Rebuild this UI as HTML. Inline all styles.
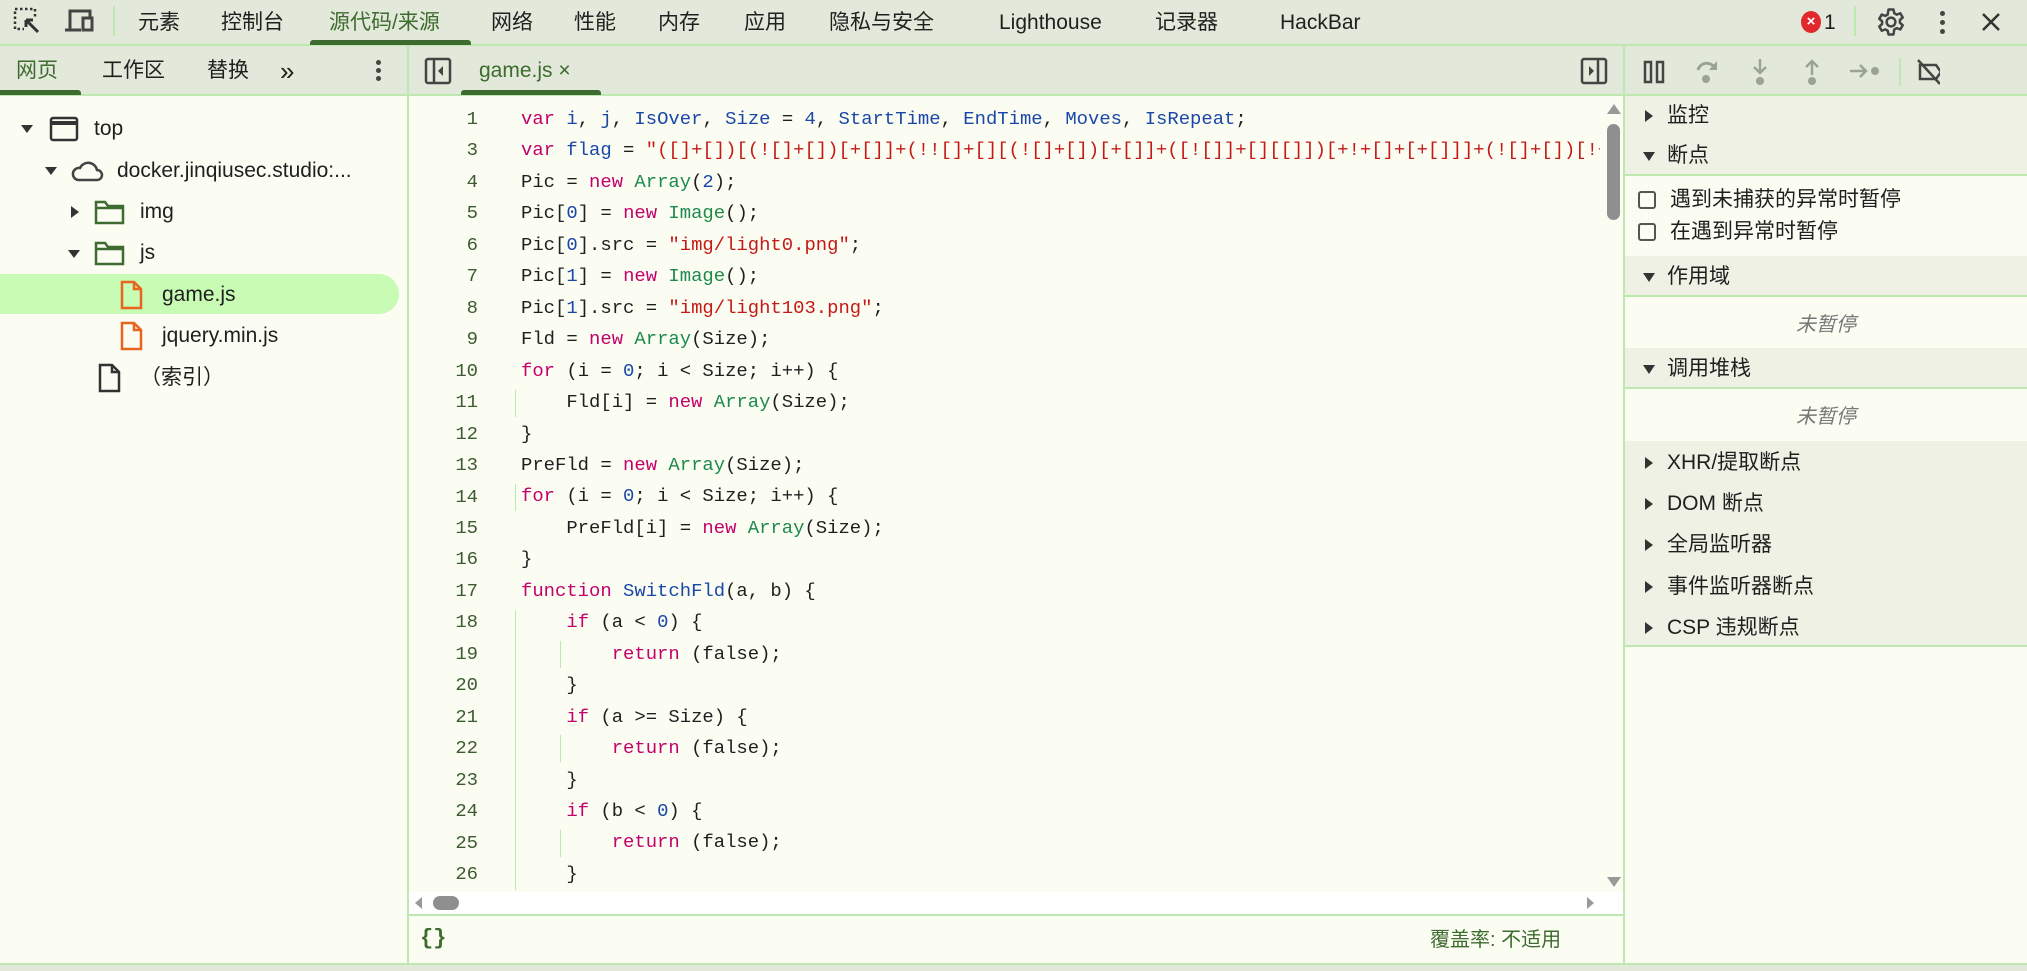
<!DOCTYPE html>
<html><head><meta charset="utf-8"><style>
*{box-sizing:border-box;margin:0;padding:0}
body{width:2027px;height:971px;overflow:hidden;background:#fbfdf3;font-family:"Liberation Sans","Noto Sans CJK SC",sans-serif;color:#1f1f1f;position:relative;font-size:21px;line-height:30px}
.a{position:absolute;white-space:nowrap}
.t{top:0;line-height:46px}
.t2{top:48px;line-height:46px}
.bar{background:#e3e9da;border-bottom:2px solid #bfe8b0}
.code{font-family:"Liberation Mono","Noto Sans CJK SC",monospace;font-size:18.9px;line-height:31.46px}
.k{color:#c3006b}.b{color:#1a47a8}.g{color:#1d8a4a}.s{color:#c41a16}.n{color:#1a47a8}
.ln{position:absolute;width:70px;text-align:right;left:408px;color:#3d5a30}
.hd{background:#eef1e3}
</style></head><body>
<!-- top bar -->
<div class="a bar" style="left:0;top:0;width:2027px;height:46px"></div>
<svg class="a" style="left:12px;top:6px" width="30" height="30" viewBox="0 0 30 30"><rect x="3" y="3" width="20" height="20" fill="none" stroke="#333" stroke-width="2.5" stroke-dasharray="2.5 2.5"/><rect x="12" y="12" width="16" height="16" fill="#e3e9da"/><path d="M14 14l12 12M14 14h7M14 14v7" stroke="#333" stroke-width="3" fill="none"/></svg>
<svg class="a" style="left:64px;top:8px" width="32" height="26" viewBox="0 0 32 26"><path d="M6 22V3h20v6" stroke="#444" stroke-width="3" fill="none"/><path d="M1 22h16" stroke="#444" stroke-width="3"/><rect x="19" y="10" width="9" height="12" fill="none" stroke="#444" stroke-width="3"/></svg>
<div class="a" style="left:113px;top:6px;width:2px;height:30px;background:#bfe8b0"></div>
<div class="a t" style="left:138px">元素</div>
<div class="a t" style="left:221px">控制台</div>
<div class="a t" style="left:329px;color:#3e6b2f">源代码/来源</div>
<div class="a" style="top:40px;left:310px;width:161px;height:5px;background:#3e6b2f;border-radius:3px 3px 0 0"></div>
<div class="a t" style="left:491px">网络</div>
<div class="a t" style="left:574px">性能</div>
<div class="a t" style="left:658px">内存</div>
<div class="a t" style="left:744px">应用</div>
<div class="a t" style="left:829px">隐私与安全</div>
<div class="a t" style="left:999px">Lighthouse</div>
<div class="a t" style="left:1155px">记录器</div>
<div class="a t" style="left:1280px">HackBar</div>
<div class="a" style="top:11px;left:1801px;width:20px;height:22px;border-radius:50%;background:#e0282d;color:#fff;font-size:15px;text-align:center;line-height:22px;font-weight:bold">×</div>
<div class="a t" style="left:1824px">1</div>
<div class="a" style="top:6px;left:1854px;width:2px;height:30px;background:#bfe8b0"></div>
<svg class="a" style="left:1876px;top:7px" width="30" height="30" viewBox="0 0 24 24"><path d="M12 8.5a3.5 3.5 0 1 0 0 7 3.5 3.5 0 0 0 0-7z" fill="none" stroke="#444" stroke-width="2"/><path d="M10 2h4l.6 3 2 1.1 2.8-1.1 2 3.4-2.3 2v2.2l2.3 2-2 3.4-2.8-1.1-2 1.1L14 22h-4l-.6-3-2-1.1-2.8 1.1-2-3.4 2.3-2V11.4L2.6 9.4l2-3.4 2.8 1.1 2-1.1z" fill="none" stroke="#444" stroke-width="2" stroke-linejoin="round"/></svg>
<div class="a" style="left:1940px;top:11px;width:5px;height:5px;border-radius:50%;background:#444;box-shadow:0 9px 0 #444,0 18px 0 #444"></div>
<svg class="a" style="left:1980px;top:11px" width="22" height="22" viewBox="0 0 22 22"><path d="M3 3l16 16M19 3L3 19" stroke="#333" stroke-width="2.5"/></svg>
<!-- second row -->
<div class="a bar" style="left:0;top:46px;width:2027px;height:50px"></div>
<div class="a" style="left:407px;top:46px;width:2px;height:925px;background:#bfe8b0"></div>
<div class="a" style="left:1623px;top:46px;width:2px;height:925px;background:#bfe8b0"></div>
<div class="a t2" style="left:16px;color:#3e6b2f">网页</div>
<div class="a" style="top:90px;left:0;width:81px;height:5px;background:#3e6b2f;border-radius:0 3px 0 0"></div>
<div class="a t2" style="left:102px">工作区</div>
<div class="a t2" style="left:207px">替换</div>
<div class="a t2" style="left:280px;font-size:26px">»</div>
<div class="a" style="left:376px;top:60px;width:5px;height:5px;border-radius:50%;background:#444;box-shadow:0 8px 0 #444,0 16px 0 #444"></div>
<svg class="a" style="left:424px;top:57px" width="28" height="28" viewBox="0 0 28 28"><rect x="2" y="2" width="24" height="24" rx="2" fill="none" stroke="#444" stroke-width="2.5"/><path d="M10 2v24" stroke="#444" stroke-width="2.5"/><path d="M19 9l-5 5 5 5z" fill="#444"/></svg>
<div class="a t2" style="left:479px;color:#3e6b2f">game.js ×</div>
<div class="a" style="top:90px;left:461px;width:140px;height:5px;background:#3e6b2f;border-radius:3px 3px 0 0"></div>
<svg class="a" style="left:1580px;top:57px" width="28" height="28" viewBox="0 0 28 28"><rect x="2" y="2" width="24" height="24" rx="2" fill="none" stroke="#444" stroke-width="2.5"/><path d="M18 2v24" stroke="#444" stroke-width="2.5"/><path d="M9 9l5 5-5 5z" fill="#444"/></svg>
<!-- debugger toolbar -->
<svg class="a" style="left:1640px;top:56px" width="300" height="32" viewBox="0 0 300 32">
<rect x="5" y="6" width="6" height="20" fill="none" stroke="#444" stroke-width="2.5"/><rect x="17" y="6" width="6" height="20" fill="none" stroke="#444" stroke-width="2.5"/>
<path d="M58 14a9 9 0 0 1 16-3" fill="none" stroke="#9aa493" stroke-width="3"/><path d="M77 5v9h-8z" fill="#9aa493"/><circle cx="66" cy="23" r="4" fill="#9aa493"/>
<path d="M120 3v14M114 11l6 6 6-6" fill="none" stroke="#9aa493" stroke-width="2.5"/><circle cx="120" cy="25" r="4" fill="#9aa493"/>
<path d="M172 19V5M166 11l6-6 6 6" fill="none" stroke="#9aa493" stroke-width="2.5"/><circle cx="172" cy="25" r="4" fill="#9aa493"/>
<path d="M210 15h16M220 9l6 6-6 6" fill="none" stroke="#9aa493" stroke-width="2.5"/><circle cx="235" cy="15" r="4" fill="#9aa493"/>
<rect x="259" y="2" width="2" height="28" fill="#bfe8b0"/>
<path d="M280 9h16l5 7-5 7h-16z" fill="none" stroke="#444" stroke-width="2.5"/><path d="M278 4l22 24" stroke="#444" stroke-width="2.5"/>
</svg>
<!-- left tree -->
<div class="a" style="left:0;top:274px;width:399px;height:40px;background:#c8fbb4;border-radius:0 20px 20px 0"></div>
<div class="a" style="left:21px;top:125px;border-left:6px solid transparent;border-right:6px solid transparent;border-top:8px solid #333"></div>
<svg class="a" style="left:49px;top:116px" width="30" height="26"><rect x="2" y="2" width="26" height="22" rx="2" fill="none" stroke="#333" stroke-width="2.5"/><path d="M2 7h26" stroke="#333" stroke-width="4"/></svg>
<div class="a" style="left:94px;top:114px">top</div>
<div class="a" style="left:45px;top:167px;border-left:6px solid transparent;border-right:6px solid transparent;border-top:8px solid #333"></div>
<svg class="a" style="left:70px;top:157px" width="34" height="26" viewBox="0 0 34 26"><path d="M8 23h19a5 5 0 0 0 0-10 9 9 0 0 0-17-2 6 6 0 0 0-2 12z" fill="none" stroke="#444" stroke-width="2.5"/></svg>
<div class="a" style="left:117px;top:156px">docker.jinqiusec.studio:...</div>
<div class="a" style="left:71px;top:206px;border-top:6px solid transparent;border-bottom:6px solid transparent;border-left:8px solid #333"></div>
<svg class="a" style="left:94px;top:199px" width="32" height="26"><path d="M2 24V3h9l3 4h15v17z" fill="none" stroke="#3e6b2f" stroke-width="2.5"/><path d="M2 9h27" stroke="#3e6b2f" stroke-width="2.5"/></svg>
<div class="a" style="left:140px;top:197px">img</div>
<div class="a" style="left:68px;top:250px;border-left:6px solid transparent;border-right:6px solid transparent;border-top:8px solid #333"></div>
<svg class="a" style="left:94px;top:240px" width="32" height="26"><path d="M2 24V3h9l3 4h15v17z" fill="none" stroke="#3e6b2f" stroke-width="2.5"/><path d="M2 9h27" stroke="#3e6b2f" stroke-width="2.5"/></svg>
<div class="a" style="left:140px;top:238px">js</div>
<svg class="a" style="left:120px;top:280px" width="24" height="30"><path d="M2 2h12l7 7v19H2z" fill="none" stroke="#e8641f" stroke-width="2.5"/><path d="M14 2v7h7" fill="none" stroke="#e8641f" stroke-width="2.5"/></svg>
<div class="a" style="left:162px;top:280px">game.js</div>
<svg class="a" style="left:120px;top:321px" width="24" height="30"><path d="M2 2h12l7 7v19H2z" fill="none" stroke="#e8641f" stroke-width="2.5"/><path d="M14 2v7h7" fill="none" stroke="#e8641f" stroke-width="2.5"/></svg>
<div class="a" style="left:162px;top:321px">jquery.min.js</div>
<svg class="a" style="left:98px;top:363px" width="24" height="30"><path d="M2 2h12l7 7v19H2z" fill="none" stroke="#333" stroke-width="2.5"/><path d="M14 2v7h7" fill="none" stroke="#333" stroke-width="2.5"/></svg>
<div class="a" style="left:140px;top:363px">（索引）</div>
<!-- code -->
<div class="a" style="left:409px;top:96px;width:1214px;height:797px;background:#fbfdf3"></div>
<div class="a code" style="left:0;top:104px;width:1600px;height:788px;overflow:hidden">
<div class="ln" style="top:0">1</div><div class="ln" style="top:31.46px">3</div><div class="ln" style="top:62.9px">4</div><div class="ln" style="top:94.4px">5</div><div class="ln" style="top:125.8px">6</div><div class="ln" style="top:157.3px">7</div><div class="ln" style="top:188.8px">8</div><div class="ln" style="top:220.2px">9</div><div class="ln" style="top:251.7px">10</div><div class="ln" style="top:283.1px">11</div><div class="ln" style="top:314.6px">12</div><div class="ln" style="top:346px">13</div><div class="ln" style="top:377.5px">14</div><div class="ln" style="top:409px">15</div><div class="ln" style="top:440.4px">16</div><div class="ln" style="top:471.9px">17</div><div class="ln" style="top:503.4px">18</div><div class="ln" style="top:534.8px">19</div><div class="ln" style="top:566.2px">20</div><div class="ln" style="top:597.7px">21</div><div class="ln" style="top:629.2px">22</div><div class="ln" style="top:660.6px">23</div><div class="ln" style="top:692px">24</div><div class="ln" style="top:723.5px">25</div><div class="ln" style="top:755px">26</div>
<div class="a" style="left:515px;top:286px;width:1px;height:27px;background:#bfe8b0"></div>
<div class="a" style="left:515px;top:380px;width:1px;height:27px;background:#bfe8b0"></div>
<div class="a" style="left:515px;top:506px;width:1px;height:280px;background:#bfe8b0"></div>
<div class="a" style="left:560px;top:537px;width:1px;height:27px;background:#bfe8b0"></div>
<div class="a" style="left:560px;top:631px;width:1px;height:27px;background:#bfe8b0"></div>
<div class="a" style="left:560px;top:726px;width:1px;height:27px;background:#bfe8b0"></div>
<pre class="code" style="position:absolute;left:521px;top:0;width:1080px;overflow:hidden;white-space:pre;font-family:inherit">
<span class="k">var</span> <span class="b">i</span>, <span class="b">j</span>, <span class="b">IsOver</span>, <span class="b">Size</span> = <span class="n">4</span>, <span class="b">StartTime</span>, <span class="b">EndTime</span>, <span class="b">Moves</span>, <span class="b">IsRepeat</span>;
<span class="k">var</span> <span class="b">flag</span> = <span class="s">"([]+[])[(![]+[])[+[]]+(!![]+[][(![]+[])[+[]]+([![]]+[][[]])[+!+[]+[+[]]]+(![]+[])[!+[]+!+[]]+(!![]+[])[+[]]</span>
Pic = <span class="k">new</span> <span class="g">Array</span>(<span class="n">2</span>);
Pic[<span class="n">0</span>] = <span class="k">new</span> <span class="g">Image</span>();
Pic[<span class="n">0</span>].src = <span class="s">"img/light0.png"</span>;
Pic[<span class="n">1</span>] = <span class="k">new</span> <span class="g">Image</span>();
Pic[<span class="n">1</span>].src = <span class="s">"img/light103.png"</span>;
Fld = <span class="k">new</span> <span class="g">Array</span>(Size);
<span class="k">for</span> (i = <span class="n">0</span>; i &lt; Size; i++) {
    Fld[i] = <span class="k">new</span> <span class="g">Array</span>(Size);
}
PreFld = <span class="k">new</span> <span class="g">Array</span>(Size);
<span class="k">for</span> (i = <span class="n">0</span>; i &lt; Size; i++) {
    PreFld[i] = <span class="k">new</span> <span class="g">Array</span>(Size);
}
<span class="k">function</span> <span class="b">SwitchFld</span>(a, b) {
    <span class="k">if</span> (a &lt; <span class="n">0</span>) {
        <span class="k">return</span> (false);
    }
    <span class="k">if</span> (a &gt;= Size) {
        <span class="k">return</span> (false);
    }
    <span class="k">if</span> (b &lt; <span class="n">0</span>) {
        <span class="k">return</span> (false);
    }
</pre></div>
<!-- scrollbars -->
<div class="a" style="left:1607px;top:104px;border-left:7px solid transparent;border-right:7px solid transparent;border-bottom:10px solid #999"></div>
<div class="a" style="left:1607px;top:124px;width:13px;height:96px;border-radius:7px;background:#8f8f8f"></div>
<div class="a" style="left:1607px;top:877px;border-left:7px solid transparent;border-right:7px solid transparent;border-top:10px solid #999"></div>
<div class="a" style="left:409px;top:892px;width:1214px;height:23px;background:#fff"></div>
<div class="a" style="left:415px;top:897px;border-top:6px solid transparent;border-bottom:6px solid transparent;border-right:7px solid #999"></div>
<div class="a" style="left:433px;top:896px;width:26px;height:14px;border-radius:7px;background:#8f8f8f"></div>
<div class="a" style="left:1587px;top:897px;border-top:6px solid transparent;border-bottom:6px solid transparent;border-left:7px solid #999"></div>
<div class="a" style="left:409px;top:914px;width:1214px;height:2px;background:#bfe8b0"></div>
<div class="a" style="left:420px;top:924px;color:#3e6b2f;font-family:'Liberation Mono',monospace;font-weight:bold;font-size:22px">{}</div>
<div class="a" style="left:1430px;top:925px;color:#3e6b2f;font-size:20px">覆盖率: 不适用</div>
<div class="a" style="left:0;top:963px;width:2027px;height:8px;background:#e3e9da;border-top:2px solid #bfe8b0"></div>
<!-- right panel -->
<div class="a hd" style="left:1625px;top:96px;width:402px;height:80px;border-bottom:2px solid #bfe8b0"></div>
<div class="a" style="left:1645px;top:110px;border-top:6px solid transparent;border-bottom:6px solid transparent;border-left:8px solid #333"></div>
<div class="a" style="left:1667px;top:101px">监控</div>
<div class="a" style="left:1643px;top:152px;border-left:6px solid transparent;border-right:6px solid transparent;border-top:9px solid #333"></div>
<div class="a" style="left:1667px;top:141px">断点</div>
<div class="a" style="left:1638px;top:191px;width:18px;height:18px;border:2px solid #555;border-radius:3px"></div>
<div class="a" style="left:1670px;top:185px">遇到未捕获的异常时暂停</div>
<div class="a" style="left:1638px;top:223px;width:18px;height:18px;border:2px solid #555;border-radius:3px"></div>
<div class="a" style="left:1670px;top:217px">在遇到异常时暂停</div>
<div class="a hd" style="left:1625px;top:256px;width:402px;height:41px;border-bottom:2px solid #bfe8b0"></div>
<div class="a" style="left:1643px;top:273px;border-left:6px solid transparent;border-right:6px solid transparent;border-top:9px solid #333"></div>
<div class="a" style="left:1667px;top:262px">作用域</div>
<div class="a" style="left:1625px;top:310px;width:402px;text-align:center;color:#777;font-style:italic;font-size:20px">未暂停</div>
<div class="a hd" style="left:1625px;top:348px;width:402px;height:41px;border-bottom:2px solid #bfe8b0"></div>
<div class="a" style="left:1643px;top:365px;border-left:6px solid transparent;border-right:6px solid transparent;border-top:9px solid #333"></div>
<div class="a" style="left:1667px;top:354px">调用堆栈</div>
<div class="a" style="left:1625px;top:402px;width:402px;text-align:center;color:#777;font-style:italic;font-size:20px">未暂停</div>
<div class="a hd" style="left:1625px;top:441px;width:402px;height:206px;border-bottom:2px solid #bfe8b0"></div>
<div class="a" style="left:1645px;top:457px;border-top:6px solid transparent;border-bottom:6px solid transparent;border-left:8px solid #333"></div>
<div class="a" style="left:1667px;top:448px">XHR/提取断点</div>
<div class="a" style="left:1645px;top:498px;border-top:6px solid transparent;border-bottom:6px solid transparent;border-left:8px solid #333"></div>
<div class="a" style="left:1667px;top:489px">DOM 断点</div>
<div class="a" style="left:1645px;top:539px;border-top:6px solid transparent;border-bottom:6px solid transparent;border-left:8px solid #333"></div>
<div class="a" style="left:1667px;top:530px">全局监听器</div>
<div class="a" style="left:1645px;top:581px;border-top:6px solid transparent;border-bottom:6px solid transparent;border-left:8px solid #333"></div>
<div class="a" style="left:1667px;top:572px">事件监听器断点</div>
<div class="a" style="left:1645px;top:622px;border-top:6px solid transparent;border-bottom:6px solid transparent;border-left:8px solid #333"></div>
<div class="a" style="left:1667px;top:613px">CSP 违规断点</div>
</body></html>
